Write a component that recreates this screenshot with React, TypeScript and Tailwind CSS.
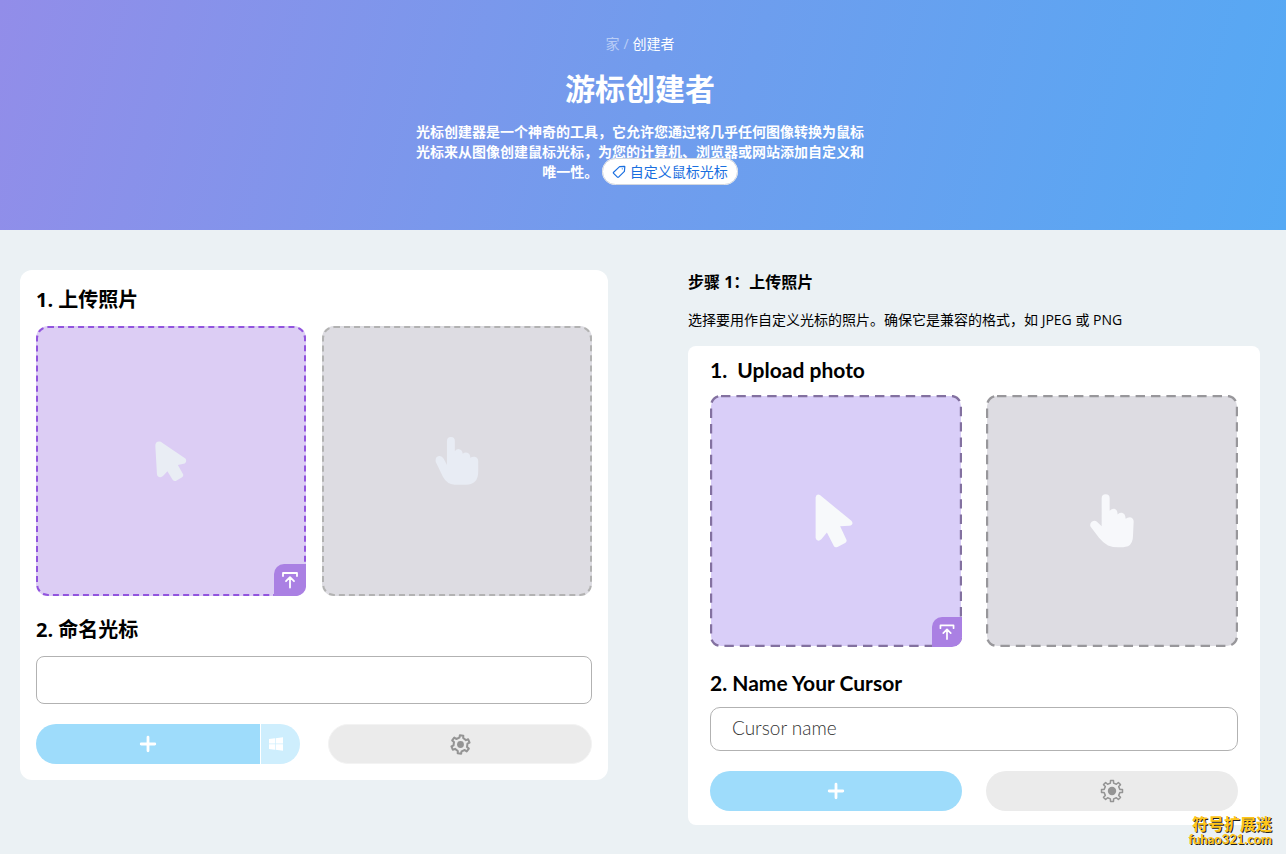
import type { ReactNode } from 'react';

// closed outline of a cog, centred on 12,12
function cogPath(teeth: number, outer: number, inner: number, turn: number) {
  const step = (Math.PI * 2) / teeth;
  const points: string[] = [];
  for (let i = 0; i < teeth; i++) {
    const a = i * step + turn;
    [[-0.26, inner], [-0.18, outer], [0.18, outer], [0.26, inner]].forEach(([k, r]) => {
      points.push(`${(12 + r * Math.sin(a + k * step)).toFixed(2)} ${(12 - r * Math.cos(a + k * step)).toFixed(2)}`);
    });
  }
  return `M${points.join('L')}Z`;
}

function GearIcon({ teeth, className }: { teeth: number; className: string }) {
  const bold = teeth < 8;
  return (
    <svg viewBox="0 0 24 24" className={className} fill="none" stroke="#949494" strokeLinejoin="round" aria-hidden="true">
      <path d={cogPath(teeth, 10.6, 8, bold ? 0.12 : 0)} strokeWidth={bold ? 2.3 : 1.5} />
      <circle cx="12" cy="12" r={bold ? 3.9 : 4.2} fill="#949494" stroke="none" />
    </svg>
  );
}

function PlusIcon() {
  return (
    <svg viewBox="0 0 18 18" className="h-[18px] w-[18px]" fill="none" stroke="#fff" strokeWidth="2.8" strokeLinecap="round" aria-hidden="true">
      <path d="M9 2.2V15.8M2.2 9H15.8" />
    </svg>
  );
}

function UploadIcon() {
  return (
    <svg viewBox="0 0 32 32" className="h-full w-full" fill="none" stroke="#fff" strokeWidth="1.8" strokeLinecap="round" strokeLinejoin="round" aria-hidden="true">
      <path d="M9 12V9H23V12M16 23.5V13.5M12 17.2L16 13.2L20 17.2" />
    </svg>
  );
}

function WindowsIcon() {
  return (
    <svg viewBox="0 0 14 14" className="h-[14px] w-[14px]" fill="#fff" aria-hidden="true">
      <path d="M0 2.1L6 1.3V6.6H0ZM6.7 1.2L14 .2V6.6H6.7ZM0 7.3H6V12.7L0 11.9ZM6.7 7.3H14V13.8L6.7 12.8Z" />
    </svg>
  );
}

function TagIcon() {
  return (
    <svg viewBox="0 0 14 14" className="mr-1 inline h-[14px] w-[14px] align-[-2px]" fill="none" stroke="#1a6fe0" strokeWidth="1.2" strokeLinejoin="round" aria-hidden="true">
      <path d="M7.6 1.6L12.2 1.3Q12.9 1.3 12.8 2L12.4 6.4L6.6 12.2Q6 12.8 5.4 12.2L1.6 8.4Q1 7.8 1.6 7.2Z" />
      <circle cx="10.3" cy="3.8" r=".6" fill="#1a6fe0" stroke="none" />
    </svg>
  );
}

function Header() {
  return (
    <header className="bg-[linear-gradient(105deg,#928de9_0%,#719ced_50%,#55a9f4_100%)] pt-[34px] pr-[26px] pb-12 pl-5 text-center text-white">
      <nav aria-label="breadcrumb" className="flex justify-center gap-1 text-sm">
        <a href="#" className="text-white/50">家</a>
        <span className="text-white/50">/</span>
        <span>创建者</span>
      </nav>
      <h1 className="mt-3 text-[30px] leading-[46px] font-bold">游标创建者</h1>
      <p className="mx-auto mt-[10px] max-w-[450px] text-sm leading-5 font-bold">
        光标创建器是一个神奇的工具，它允许您通过将几乎任何图像转换为鼠标光标来从图像创建鼠标光标，为您的计算机、浏览器或网站添加自定义和唯一性。{' '}
        <a href="#" className="rounded-full border border-[#d3d7de] bg-white px-[9px] py-[3px] font-normal whitespace-nowrap text-[#1a6fe0]">
          <TagIcon />自定义鼠标光标
        </a>
      </p>
    </header>
  );
}

function Creator() {
  return (
    <section className="rounded-xl bg-white p-4">
      <h2 className="text-xl leading-7 font-bold">1. 上传照片</h2>
      <div className="mt-3 grid grid-cols-2 gap-4">
        <div className="relative flex aspect-square items-center justify-center rounded-xl border-2 border-dashed border-[#9254de] bg-[#dccdf4]">
          <svg viewBox="75 61 98 124" className="h-[41px] w-8" fill="#e9edf4" aria-hidden="true">
            <path d="M76 75Q76 62 88 62Q93 62 98 66L168 114Q174 122 166 129L145 134L161 162Q163 167 158 171L140 182Q134 185 129 179L113 153L101 166Q96 171 91 171Q82 170 81 162Z" />
          </svg>
          <button type="button" aria-label="上传" className="absolute -right-0.5 -bottom-0.5 h-8 w-8 rounded-tl-[10px] rounded-br-[10px] bg-[#aa80e3]">
            <UploadIcon />
          </button>
        </div>
        <div className="flex aspect-square items-center justify-center rounded-xl border-2 border-dashed border-[#b2b2b2] bg-[#dddce2]">
          <svg viewBox="107 80 131 146" className="h-12 w-11" fill="#e8ecf4" aria-hidden="true">
            <path d="M142 92Q142 80 154 80Q166 80 166 92V123Q171 116 179 117Q188 118 190 131Q196 126 204 128Q213 131 213 143Q219 139 226 140Q237 142 237 154V185Q237 225 200 225H165Q142 224 130 202L108 156Q105 140 118 138Q127 137 132 146L142 165Z" />
          </svg>
        </div>
      </div>
      <h2 className="mt-5 text-xl leading-7 font-bold">
        <label htmlFor="name">2. 命名光标</label>
      </h2>
      <input id="name" type="text" className="mt-3 block h-12 w-full rounded-lg border border-[#b2b2b2] bg-white px-4" />
      <div className="mt-5 grid grid-cols-2 gap-7">
        <div className="flex h-10 gap-px overflow-hidden rounded-full">
          <button type="button" aria-label="添加" className="flex flex-1 items-center justify-center bg-[#9edcfb]">
            <PlusIcon />
          </button>
          <button type="button" aria-label="Windows" className="flex w-[39px] items-center bg-[#ceeefd] pl-2">
            <WindowsIcon />
          </button>
        </div>
        <button type="button" aria-label="设置" className="flex h-10 items-center justify-center rounded-full border border-[#f3f3f3] bg-[#ebebeb]">
          <GearIcon teeth={6} className="h-[21px] w-[21px]" />
        </button>
      </div>
    </section>
  );
}

function PreviewTile({ fill, stroke, children }: { fill: string; stroke: string; children: ReactNode }) {
  return (
    <div className="relative flex aspect-square items-center justify-center">
      <svg className="absolute inset-0 h-full w-full" aria-hidden="true">
        <rect x="1" y="1" rx="10" className="h-[calc(100%-2px)] w-[calc(100%-2px)]" fill={fill} stroke={stroke} strokeWidth="2.4" strokeDasharray="9.4 6" />
      </svg>
      {children}
    </div>
  );
}

function Steps() {
  return (
    <section>
      <h3 className="text-base leading-6 font-bold">步骤 1：上传照片</h3>
      <p className="mt-4 text-sm leading-5">选择要用作自定义光标的照片。确保它是兼容的格式，如 JPEG 或 PNG</p>
      <div className="mt-4 rounded-lg bg-white px-[22px] pt-[10px] pb-[14px] font-[Lato,sans-serif]">
        <h4 className="text-[21px] leading-7 font-bold whitespace-pre">1.  Upload photo</h4>
        <div className="mt-[11px] grid grid-cols-2 gap-6">
          <PreviewTile fill="#d9cef8" stroke="#8371a0">
            <svg viewBox="76 42 125 163" className="relative h-[54px] w-[42px]" fill="#f7f9fb" aria-hidden="true">
              <path d="M77 52Q79 40 90 45L185 123Q191 130 186 135Q184 138 178 138L151 139L170 180Q172 187 166 190L143 202Q135 205 132 199L111 158L95 178Q90 183 85 183Q78 182 77 175Z" />
            </svg>
            <span className="absolute right-0 bottom-0 h-[30px] w-[30px] rounded-tl-[10px] rounded-br-[10px] bg-[#aa80e3]">
              <UploadIcon />
            </span>
          </PreviewTile>
          <PreviewTile fill="#dddce2" stroke="#98979b">
            <svg viewBox="88 43 132 161" className="relative h-[54px] w-11" fill="#f7f8fb" aria-hidden="true">
              <path d="M123 55Q123 43 135 43Q147 43 147 55V93Q152 87 160 87Q170 88 171 104Q176 97 184 99Q194 101 195 117Q200 112 208 112Q219 114 219 125L217 168Q217 192 202 199Q168 207 142 197Q128 190 115 174L90 141Q86 133 93 126Q102 120 108 125L123 139Z" />
            </svg>
          </PreviewTile>
        </div>
        <h4 className="mt-[22px] text-[21px] leading-7 font-bold">
          <label htmlFor="sample">2. Name Your Cursor</label>
        </h4>
        <input id="sample" type="text" placeholder="Cursor name" className="mt-[10px] block h-11 w-full rounded-[10px] border border-[#b2b2b2] bg-white px-[21px] pb-1 text-[19px] font-light placeholder:text-[#333]" />
        <div className="mt-5 grid grid-cols-2 gap-6">
          <button type="button" aria-label="Add" className="flex h-10 items-center justify-center rounded-full bg-[#9edcfb]">
            <PlusIcon />
          </button>
          <button type="button" aria-label="Settings" className="flex h-10 items-center justify-center rounded-full bg-[#ebebeb]">
            <GearIcon teeth={8} className="h-6 w-6" />
          </button>
        </div>
      </div>
    </section>
  );
}

export default function App() {
  return (
    <div className="relative min-h-screen bg-[#ebf1f4] font-['Open_Sans','Noto_Sans_CJK_SC',sans-serif] text-black">
      <Header />
      <main className="grid grid-cols-[588fr_572fr] items-start gap-20 pt-10 pr-[26px] pb-7 pl-5">
        <Creator />
        <Steps />
      </main>
      {/* site stamp */}
      <div className="absolute right-[14px] bottom-2 text-right font-bold text-[#ffc61a] [text-shadow:1px_1px_0_#222]">
        <div className="text-base leading-4">符号扩展迷</div>
        <div className="font-[Lato,sans-serif] text-[13px] leading-[14px]">fuhao321.com</div>
      </div>
    </div>
  );
}
